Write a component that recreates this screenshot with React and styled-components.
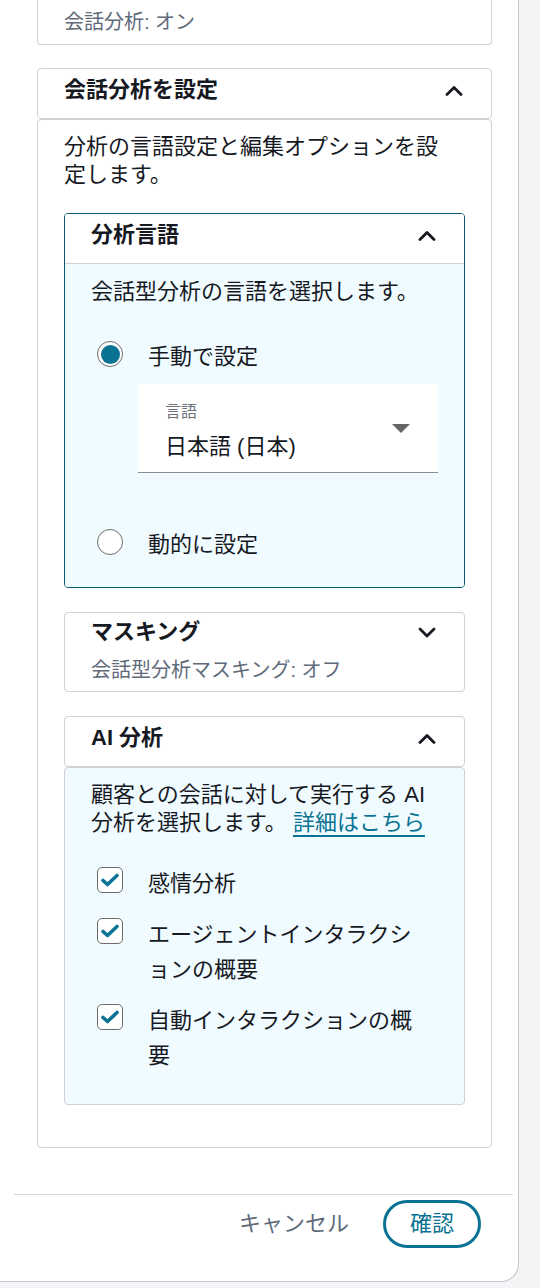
import React from "react";
import styled, { createGlobalStyle } from "styled-components";

const GlobalStyle = createGlobalStyle`
  html, body { margin: 0; padding: 0; }
  body {
    background: #f4f4f6;
    font-family: "Liberation Sans", "Noto Sans CJK JP", sans-serif;
    color: #16191f;
    -webkit-font-smoothing: antialiased;
  }
  * { box-sizing: border-box; }
`;

const TEAL = "#0a7394";
const BORDER = "#d1d1d6";

const Panel = styled.div`
  width: 519px;
  background: #fff;
  border-right: 1px solid #c6c6cc;
  border-bottom: 1px solid #c6c6cc;
  border-bottom-right-radius: 18px;
  display: flex;
  flex-direction: column;
`;

const Content = styled.div`
  padding: 0 26px 0 37px;
  display: flex;
  flex-direction: column;
`;

const ClippedCard = styled.div`
  height: 45px;
  border: 1px solid ${BORDER};
  border-top: none;
  border-radius: 0 0 4px 4px;
  padding: 0 26px;
  display: flex;
  align-items: center;
`;

const Secondary = styled.div`
  font-size: 20px;
  line-height: 28px;
  color: #5f6b7a;
`;

const Section = styled.div`
  margin-top: ${(p) => p.$gap || 0}px;
  display: flex;
  flex-direction: column;
  ${(p) =>
    p.$focused
      ? `border: 1px solid #0b5a74; border-radius: 4px; overflow: hidden;`
      : ""}
`;

const Header = styled.div`
  display: flex;
  align-items: flex-start;
  justify-content: space-between;
  padding: ${(p) => (p.$tight ? "5px 28px 7px 26px" : "7px 28px 14px 26px")};
  background: #fff;
  ${(p) =>
    p.$framed ? "" : `border: 1px solid ${BORDER}; border-radius: 4px;`}
`;

const HeaderText = styled.div`
  display: flex;
  flex-direction: column;
  gap: 10px;
`;

const Title = styled.div`
  font-size: 22px;
  line-height: 28px;
  font-weight: 700;
  color: #16191f;
`;

const ChevronBox = styled.span`
  display: flex;
  align-items: center;
  height: 28px;
`;

const Body = styled.div`
  background: ${(p) => (p.$tinted ? "#f0fbff" : "#fff")};
  padding: ${(p) => p.$pad};
  display: flex;
  flex-direction: column;
  ${(p) =>
    p.$framed
      ? `border-top: 1px solid ${BORDER};`
      : `border: 1px solid ${BORDER}; border-radius: 4px;`}
`;

const Text = styled.p`
  margin: 0;
  font-size: 22px;
  line-height: 28px;
  color: #16191f;
  max-width: ${(p) => p.$max || "none"};
`;

const Link = styled.a`
  color: ${TEAL};
  text-decoration: underline;
  text-decoration-thickness: 2px;
  text-underline-offset: 5px;
`;

const RadioRow = styled.label`
  display: flex;
  align-items: center;
  gap: 25px;
  height: 28px;
  margin-top: ${(p) => p.$gap || 0}px;
  margin-left: 6px;
  font-size: 22px;
  color: #16191f;
`;

const RadioCircle = styled.span`
  width: 26px;
  height: 26px;
  border-radius: 50%;
  border: 1.5px solid #6b6b6b;
  background: #fff;
  display: flex;
  align-items: center;
  justify-content: center;
  flex: none;
  &::after {
    content: "";
    width: 19px;
    height: 19px;
    border-radius: 50%;
    background: ${(p) => (p.$checked ? TEAL : "transparent")};
  }
`;

const Select = styled.div`
  margin: 16px 0 0 47px;
  height: 89px;
  background: #fff;
  border-bottom: 1px solid #8d8d8d;
  padding: 18px 28px 0 27px;
  display: flex;
  align-items: flex-start;
  justify-content: space-between;
`;

const SelectText = styled.div`
  display: flex;
  flex-direction: column;
`;

const SelectLabel = styled.div`
  font-size: 16px;
  line-height: 20px;
  color: #687078;
`;

const SelectValue = styled.div`
  margin-top: 10px;
  font-size: 22px;
  line-height: 30px;
  color: #16191f;
`;

const Caret = styled.span`
  margin-top: 22px;
  width: 0;
  height: 0;
  border-left: 9px solid transparent;
  border-right: 9px solid transparent;
  border-top: 9px solid #666;
`;

const CheckList = styled.div`
  display: flex;
  flex-direction: column;
  gap: 17px;
  margin-top: 30px;
  margin-left: 6px;
  padding-right: 12px;
`;

const CheckRow = styled.label`
  display: flex;
  align-items: flex-start;
  gap: 25px;
`;

const CheckBox = styled.span`
  width: 26px;
  height: 26px;
  flex: none;
  border: 1.5px solid #6b6b6b;
  border-radius: 5px;
  background: #fff;
  display: flex;
  align-items: center;
  justify-content: center;
`;

const CheckLabel = styled.span`
  font-size: 22px;
  line-height: 35px;
  margin-top: -1px;
  color: #16191f;
`;

const Footer = styled.div`
  margin: 46px 5px 0 14px;
  border-top: 1px solid #d5d5da;
  padding: 5px 32px 33px 0;
  display: flex;
  justify-content: flex-end;
  align-items: center;
  gap: 34px;
`;

const CancelButton = styled.button`
  border: none;
  background: none;
  padding: 0;
  font-family: inherit;
  font-size: 22px;
  line-height: 28px;
  color: #5f6b7a;
`;

const ConfirmButton = styled.button`
  height: 48px;
  border: 3px solid ${TEAL};
  border-radius: 24px;
  background: #fff;
  padding: 0 24px;
  font-family: inherit;
  font-size: 22px;
  line-height: 28px;
  font-weight: 400;
  color: ${TEAL};
`;

const Chevron = ({ up }) => (
  <svg width="18" height="11" viewBox="0 0 18 11">
    <path
      d={up ? "M2 9.5 L9 2.5 L16 9.5" : "M2 2 L9 9 L16 2"}
      fill="none"
      stroke="#16191f"
      strokeWidth="2.8"
      strokeLinecap="round"
      strokeLinejoin="round"
    />
  </svg>
);

const Check = () => (
  <svg width="20" height="16" viewBox="0 0 20 16">
    <path
      d="M3 8.5 L7.5 12.5 L17 3.5"
      fill="none"
      stroke={TEAL}
      strokeWidth="3.6"
      strokeLinecap="round"
      strokeLinejoin="round"
    />
  </svg>
);

const AccHeader = ({ title, subtitle, up, framed, tight }) => (
  <Header $framed={framed} $tight={tight}>
    <HeaderText>
      <Title>{title}</Title>
      {subtitle && <Secondary>{subtitle}</Secondary>}
    </HeaderText>
    <ChevronBox>
      <Chevron up={up} />
    </ChevronBox>
  </Header>
);

const checks = [
  "感情分析",
  "エージェントインタラクションの概要",
  "自動インタラクションの概要",
];

export default function App() {
  return (
    <>
      <GlobalStyle />
      <Panel>
        <Content>
          <ClippedCard>
            <Secondary>会話分析: オン</Secondary>
          </ClippedCard>

          <Section $gap={23}>
            <AccHeader title="会話分析を設定" up />
            <Body $pad="13px 26px 42px 26px">
              <Text $max="390px">
                分析の言語設定と編集オプションを設定します。
              </Text>

              <Section $gap={24} $focused>
                <AccHeader title="分析言語" up framed />
                <Body $framed $tinted $pad="14px 26px 31px 26px">
                  <Text>会話型分析の言語を選択します。</Text>
                  <RadioRow $gap={34}>
                    <RadioCircle $checked />
                    手動で設定
                  </RadioRow>
                  <Select>
                    <SelectText>
                      <SelectLabel>言語</SelectLabel>
                      <SelectValue>日本語 (日本)</SelectValue>
                    </SelectText>
                    <Caret />
                  </Select>
                  <RadioRow $gap={55}>
                    <RadioCircle />
                    動的に設定
                  </RadioRow>
                </Body>
              </Section>

              <Section $gap={24}>
                <AccHeader
                  title="マスキング"
                  subtitle="会話型分析マスキング: オフ"
                  tight
                />
              </Section>

              <Section $gap={24}>
                <AccHeader title="AI 分析" up />
                <Body $tinted $pad="13px 26px 31px 26px">
                  <Text>
                    顧客との会話に対して実行する AI 分析を選択します。{" "}
                    <Link href="#">詳細はこちら</Link>
                  </Text>
                  <CheckList>
                    {checks.map((c) => (
                      <CheckRow key={c}>
                        <CheckBox>
                          <Check />
                        </CheckBox>
                        <CheckLabel>{c}</CheckLabel>
                      </CheckRow>
                    ))}
                  </CheckList>
                </Body>
              </Section>
            </Body>
          </Section>
        </Content>

        <Footer>
          <CancelButton>キャンセル</CancelButton>
          <ConfirmButton>確認</ConfirmButton>
        </Footer>
      </Panel>
    </>
  );
}
